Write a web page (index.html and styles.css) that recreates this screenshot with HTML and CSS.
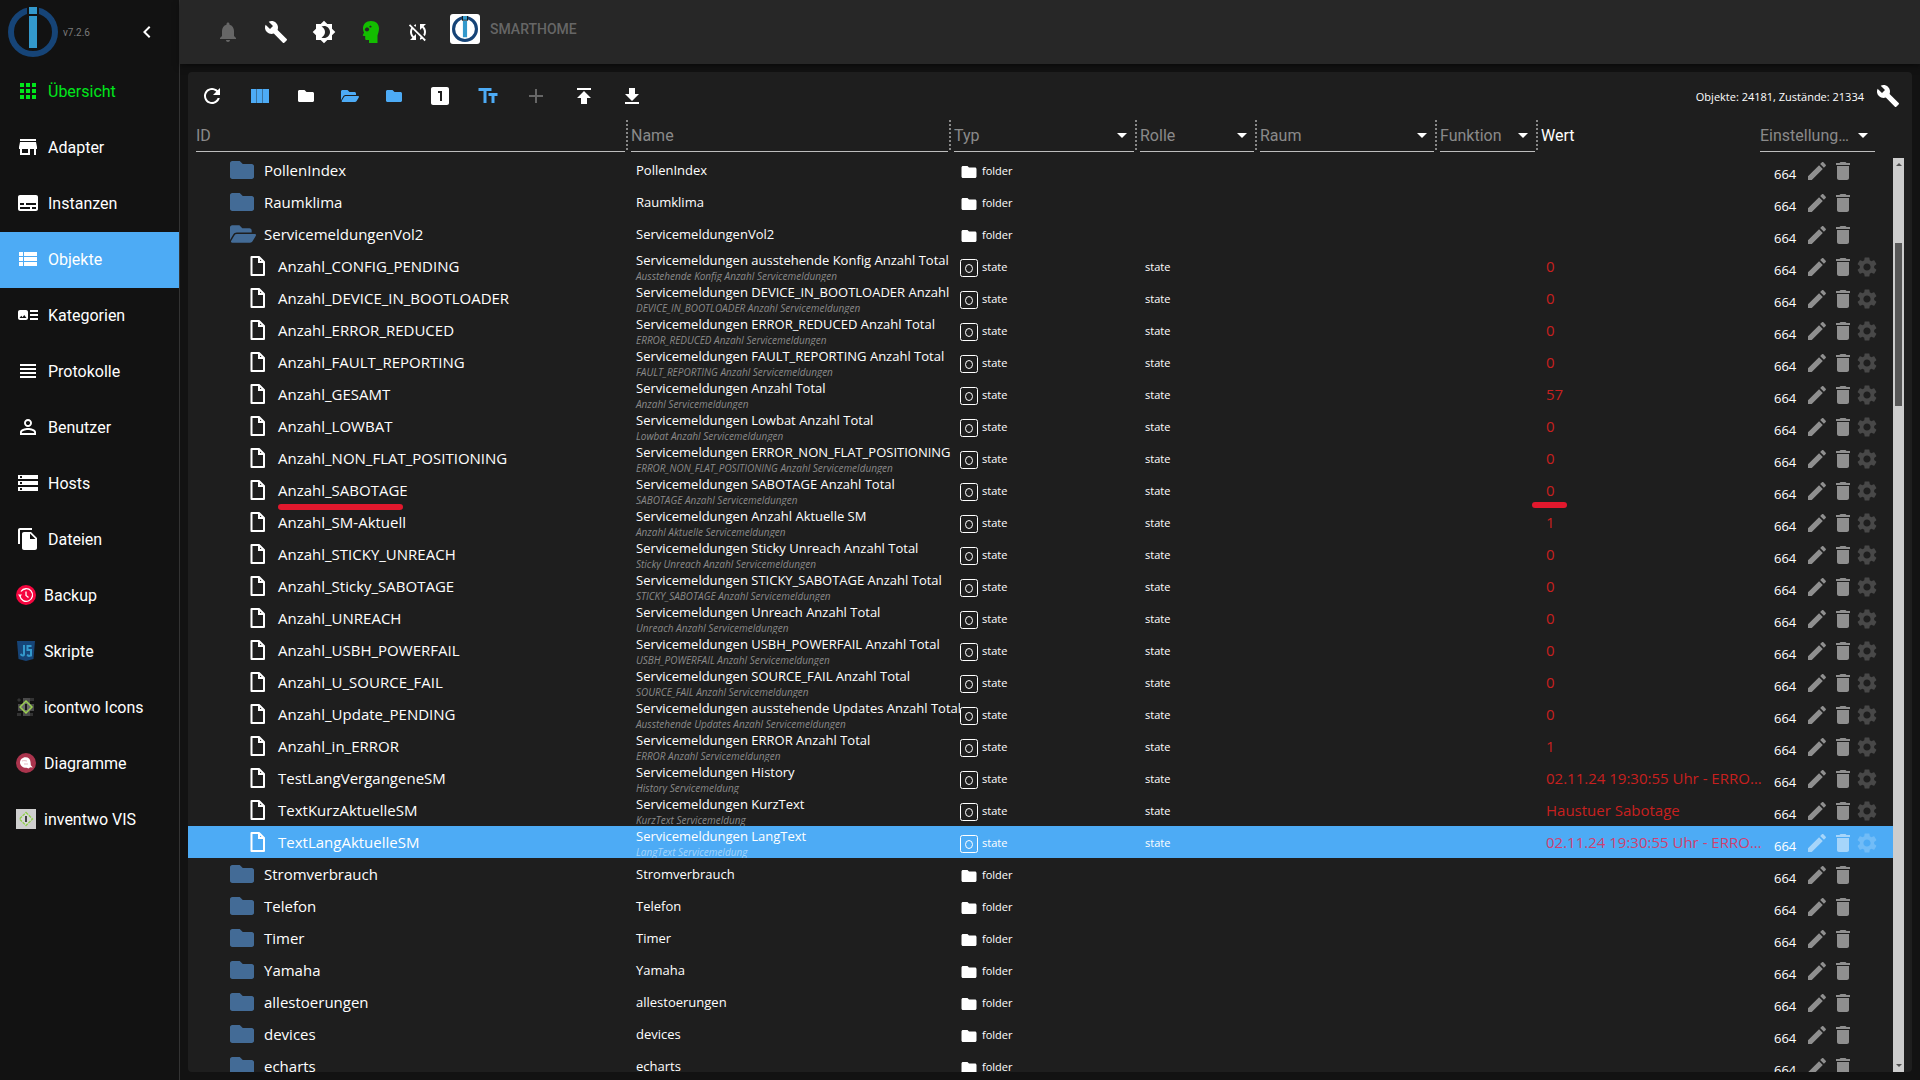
FILE: index.html
```html
<!DOCTYPE html>
<html lang="de">
<head>
<meta charset="utf-8">
<title>Objekte - ioBroker</title>
<link rel="stylesheet" href="styles.css">
</head>
<body>
<svg class="sprite" aria-hidden="true">
  <symbol id="i-chevron" viewBox="0 0 24 24"><path d="M15.41 7.41L14 6l-6 6 6 6 1.41-1.41L10.83 12z"/></symbol>
  <symbol id="i-apps" viewBox="0 0 24 24"><path d="M4 8h4V4H4v4zm6 12h4v-4h-4v4zm-6 0h4v-4H4v4zm0-6h4v-4H4v4zm6 0h4v-4h-4v4zm6-10v4h4V4h-4zm-6 4h4V4h-4v4zm6 6h4v-4h-4v4zm0 6h4v-4h-4v4z"/></symbol>
  <symbol id="i-store" viewBox="0 0 24 24"><path d="M20 4H4v2h16V4zm1 10v-2l-1-5H4l-1 5v2h1v6h10v-6h4v6h2v-6h1zm-9 4H6v-4h6v4z"/></symbol>
  <symbol id="i-subtitles" viewBox="0 0 24 24"><path d="M20 4H4c-1.1 0-2 .9-2 2v12c0 1.1.9 2 2 2h16c1.1 0 2-.9 2-2V6c0-1.1-.9-2-2-2zM4 12h4v2H4v-2zm10 6H4v-2h10v2zm6 0h-4v-2h4v2zm0-4H10v-2h10v2z"/></symbol>
  <symbol id="i-list" viewBox="0 0 24 24"><path d="M3 14h4v-4H3v4zm0 5h4v-4H3v4zM3 9h4V5H3v4zm5 5h13v-4H8v4zm0 5h13v-4H8v4zM8 5v4h13V5H8z"/></symbol>
  <symbol id="i-art" viewBox="0 0 24 24"><path d="M22 13h-8v-2h8v2zm0-6h-8v2h8V7zm-8 10h8v-2h-8v2zm-2-8v6c0 1.1-.9 2-2 2H4c-1.1 0-2-.9-2-2V9c0-1.1.9-2 2-2h6c1.1 0 2 .9 2 2zm-1.5 6l-2.25-3-1.75 2.26-1.25-1.51L3.500 15h7z"/></symbol>
  <symbol id="i-headline" viewBox="0 0 24 24"><path d="M4 15h16v-2H4v2zm0 4h16v-2H4v2zm0-8h16V9H4v2zm0-6v2h16V5H4z"/></symbol>
  <symbol id="i-person" viewBox="0 0 24 24"><path d="M12 5.900c1.160 0 2.100.940 2.100 2.100s-.940 2.100-2.100 2.100S9.900 9.160 9.900 8s.940-2.100 2.100-2.100m0 9c2.970 0 6.100 1.460 6.100 2.100v1.100H5.900V17c0-.640 3.130-2.100 6.100-2.100M12 4C9.790 4 8 5.790 8 8s1.790 4 4 4 4-1.790 4-4-1.790-4-4-4zm0 9c-2.670 0-8 1.340-8 4v3h16v-3c0-2.660-5.330-4-8-4z"/></symbol>
  <symbol id="i-storage" viewBox="0 0 24 24"><path d="M2 20h20v-4H2v4zm2-3h2v2H4v-2zM2 4v4h20V4H2zm4 3H4V5h2v2zm-4 7h20v-4H2v4zm2-3h2v2H4v-2z"/></symbol>
  <symbol id="i-copy" viewBox="0 0 24 24"><path d="M16 1H4c-1.100 0-2 .900-2 2v14h2V3h12V1zm-1 4l6 6v10c0 1.100-.900 2-2 2H7.990C6.890 23 6 22.100 6 21l.010-14c0-1.100.890-2 1.990-2h7zm-1 7h5.500L14 6.500V12z"/></symbol>
  <symbol id="i-bell" viewBox="0 0 24 24"><path d="M12 22c1.100 0 2-.900 2-2h-4c0 1.100.890 2 2 2zm6-6v-5c0-3.070-1.640-5.640-4.500-6.320V4c0-.830-.670-1.500-1.500-1.500s-1.500.670-1.500 1.500v.680C7.630 5.360 6 7.920 6 11v5l-2 2v1h16v-1l-2-2z"/></symbol>
  <symbol id="i-wrench" viewBox="0 0 24 24"><path d="M22.700 19l-9.100-9.100c.900-2.300.400-5-1.500-6.900-2-2-5-2.400-7.400-1.300L9 6 6 9 1.600 4.700C.400 7.100.900 10.100 2.900 12.100c1.900 1.900 4.600 2.400 6.900 1.500l9.100 9.100c.400.400 1 .400 1.400 0l2.300-2.300c.500-.400.500-1.100.100-1.400z"/></symbol>
  <symbol id="i-brightness" viewBox="0 0 24 24"><path d="M20 8.690V4h-4.690L12 .690 8.690 4H4v4.690L.690 12 4 15.310V20h4.690L12 23.310 15.310 20H20v-4.690L23.310 12 20 8.690zM12 18c-.890 0-1.740-.200-2.500-.550C11.560 16.500 13 14.420 13 12s-1.440-4.500-3.500-5.450C10.260 6.200 11.110 6 12 6c3.310 0 6 2.690 6 6s-2.690 6-6 6z"/></symbol>
  <symbol id="i-head" viewBox="0 0 24 24"><path fill-rule="evenodd" d="M12 1c5 0 8 3 8 7.500 0 3-1 5-1.500 7V23H10v-3H7.500c-.8 0-1.300-.5-1.300-1.300V16H4.500c-.6 0-.8-.4-.6-.9L5 12.500C4.300 11 4 10 4 8.500 4 4 7 1 12 1zM8 7.200l-1.300.8-1 1.200.6 1.600 1.500.7 1.600-.5.8-1.500-.6-1.600zM11.500 5.500l-1.200.7.4 1.300 1.400.1.600-1.200z"/></symbol>
  <symbol id="i-nosync" viewBox="0 0 24 24"><path d="M10 6.350V4.260c-.800.210-1.550.540-2.230.960l1.460 1.460c.250-.120.500-.240.770-.330zm-7.140-.940l2.360 2.360C4.450 8.990 4 10.440 4 12c0 2.210.910 4.200 2.360 5.640L4 20h6v-6l-2.240 2.240C6.680 15.150 6 13.660 6 12c0-1 .250-1.940.680-2.770l8.080 8.080c-.250.130-.500.250-.770.340v2.090c.800-.210 1.550-.540 2.230-.960l2.360 2.360 1.270-1.270L4.140 4.140 2.860 5.410zM20 4h-6v6l2.240-2.240C17.320 8.850 18 10.340 18 12c0 1-.250 1.940-.680 2.770l1.460 1.460C19.550 15.010 20 13.560 20 12c0-2.210-.910-4.200-2.360-5.640L20 4z"/></symbol>
  <symbol id="i-refresh" viewBox="0 0 24 24"><path d="M17.650 6.350C16.200 4.900 14.210 4 12 4c-4.420 0-7.990 3.580-7.990 8s3.570 8 7.990 8c3.730 0 6.840-2.550 7.730-6h-2.080c-.820 2.330-3.040 4-5.650 4-3.310 0-6-2.690-6-6s2.690-6 6-6c1.660 0 3.140.690 4.220 1.780L13 11h7V4l-2.350 2.350z"/></symbol>
  <symbol id="i-columns" viewBox="0 0 24 24"><path opacity=".6" d="M3 5h18v14H3z"/><path d="M3 5h5v14H3zM9 5h5v14H9zM15 5h6v14h-6z"/></symbol>
  <symbol id="i-folder" viewBox="0 0 512 512"><path d="M464 128H272l-64-64H48C21.490 64 0 85.490 0 112v288c0 26.510 21.490 48 48 48h416c26.510 0 48-21.490 48-48V176c0-26.510-21.490-48-48-48z"/></symbol>
  <symbol id="i-folder-open" viewBox="0 0 576 512"><path d="M572.694 292.093L500.270 416.248A63.997 63.997 0 0 1 444.989 448H45.025c-18.523 0-30.064-20.093-20.731-36.093l72.424-124.155A64 64 0 0 1 152 256h399.964c18.523 0 30.064 20.093 20.730 36.093zM152 224h328v-48c0-26.510-21.490-48-48-48H272l-64-64H48C21.490 64 0 85.490 0 112v278.046l69.077-118.418C86.214 242.250 117.989 224 152 224z"/></symbol>
  <symbol id="i-one" viewBox="0 0 24 24"><path d="M19 3H5c-1.100 0-2 .900-2 2v14c0 1.100.900 2 2 2h14c1.100 0 2-.900 2-2V5c0-1.100-.900-2-2-2zm-5 14h-2V9h-2V7h4v10z"/></symbol>
  <symbol id="i-text" viewBox="0 0 24 24"><path d="M2.500 4v3h5v12h3V7h5V4h-13zm19 5h-9v3h3v7h3v-7h3V9z"/></symbol>
  <symbol id="i-add" viewBox="0 0 24 24"><path d="M19 13h-6v6h-2v-6H5v-2h6V5h2v6h6v2z"/></symbol>
  <symbol id="i-upload" viewBox="0 0 24 24"><path d="M5 4v2h14V4H5zm0 10h4v6h6v-6h4l-7-7-7 7z"/></symbol>
  <symbol id="i-download" viewBox="0 0 24 24"><path d="M19 10h-4V4H9v6H5l7 7 7-7zM5 18v2h14v-2H5z"/></symbol>
  <symbol id="i-doc" viewBox="0 0 15 20"><path fill="none" stroke="currentColor" stroke-width="2" stroke-linejoin="round" d="M1.500 1h7.500L14 6v13H1.500z"/><path d="M8 1h2v4h4v2H8z"/></symbol>
  <symbol id="i-state" viewBox="0 0 18 18"><rect x=".5" y=".5" width="17" height="17" rx="2" fill="none" stroke="currentColor"/><ellipse cx="9" cy="9.500" rx="3.500" ry="4" fill="none" stroke="currentColor"/></symbol>
  <symbol id="i-typefolder" viewBox="0 0 24 24"><path d="M10 4H4c-1.100 0-1.990.900-1.990 2L2 18c0 1.100.900 2 2 2h16c1.100 0 2-.900 2-2V8c0-1.100-.900-2-2-2h-8l-2-2z"/></symbol>
  <symbol id="i-edit" viewBox="0 0 24 24"><path d="M3 17.250V21h3.750L17.810 9.940l-3.750-3.750L3 17.250zM20.710 7.040c.390-.390.390-1.020 0-1.410l-2.340-2.340c-.390-.390-1.020-.390-1.410 0l-1.830 1.830 3.750 3.750 1.830-1.830z"/></symbol>
  <symbol id="i-delete" viewBox="0 0 24 24"><path d="M6 19c0 1.100.900 2 2 2h8c1.100 0 2-.900 2-2V7H6v12zM19 4h-3.500l-1-1h-5l-1 1H5v2h14V4z"/></symbol>
  <symbol id="i-gear" viewBox="0 0 24 24"><path d="M19.140 12.940c.040-.300.060-.610.060-.940 0-.320-.020-.640-.070-.940l2.030-1.580c.180-.140.230-.410.120-.610l-1.920-3.320c-.120-.220-.370-.290-.590-.220l-2.390.960c-.500-.380-1.030-.700-1.620-.940l-.360-2.540c-.040-.240-.240-.410-.480-.410h-3.840c-.240 0-.430.170-.470.410l-.360 2.540c-.590.240-1.130.570-1.620.940l-2.390-.960c-.220-.080-.470 0-.590.220L2.740 8.870c-.120.210-.080.470.120.610l2.030 1.580c-.050.300-.090.630-.090.940s.020.640.070.940l-2.030 1.580c-.180.140-.230.410-.120.610l1.920 3.320c.120.220.370.290.590.220l2.390-.960c.500.380 1.030.700 1.620.940l.360 2.540c.050.240.240.410.480.410h3.840c.240 0 .440-.170.470-.410l.360-2.540c.590-.240 1.130-.560 1.620-.940l2.390.960c.220.080.470 0 .590-.220l1.920-3.320c.120-.220.070-.470-.120-.610l-2.010-1.580zM12 15.600c-1.980 0-3.600-1.620-3.600-3.600s1.620-3.600 3.600-3.600 3.600 1.620 3.600 3.600-1.620 3.600-3.600 3.600z"/></symbol>
  <symbol id="i-logo" viewBox="0 0 50 50"><circle cx="25" cy="25" r="22" fill="none" stroke="#164477" stroke-width="6"/><path class="logo-gap" d="M19 0h12v9H19z"/><path fill="#3399cc" d="M21 0h8v7h-8zM21 9h8v32h-8z"/></symbol>
</svg>

<div class="app">
  <aside class="drawer">
    <header class="drawer-head">
      <a class="brand" href="#" aria-label="ioBroker"><svg class="logo"><use href="#i-logo"/></svg></a>
      <span class="version">v7.2.6</span>
      <button class="collapse" aria-label="Menü einklappen"><svg class="icon"><use href="#i-chevron"/></svg></button>
    </header>
    <nav class="menu">
      <a class="menu-item menu-item--green" href="#"><svg class="icon"><use href="#i-apps"/></svg>Übersicht</a>
      <a class="menu-item" href="#"><svg class="icon"><use href="#i-store"/></svg>Adapter</a>
      <a class="menu-item" href="#"><svg class="icon"><use href="#i-subtitles"/></svg>Instanzen</a>
      <a class="menu-item menu-item--active" href="#" aria-current="page"><svg class="icon"><use href="#i-list"/></svg>Objekte</a>
      <a class="menu-item" href="#"><svg class="icon"><use href="#i-art"/></svg>Kategorien</a>
      <a class="menu-item" href="#"><svg class="icon"><use href="#i-headline"/></svg>Protokolle</a>
      <a class="menu-item" href="#"><svg class="icon"><use href="#i-person"/></svg>Benutzer</a>
      <a class="menu-item" href="#"><svg class="icon"><use href="#i-storage"/></svg>Hosts</a>
      <a class="menu-item" href="#"><svg class="icon"><use href="#i-copy"/></svg>Dateien</a>
      <a class="menu-item" href="#"><svg class="icon icon--tab" viewBox="0 0 20 20"><circle cx="10" cy="10" r="10" fill="#f5063f"/><path d="M4 11a6.300 6.300 0 1 0 1-4.500M10 6.500V10.500l2.500 2" fill="none" stroke="#fff" stroke-width="1.300"/><path d="M2 9.500h4L4 12z" fill="#fff"/></svg>Backup</a>
      <a class="menu-item" href="#"><svg class="icon icon--tab" viewBox="0 0 20 20"><path d="M1 0h18l-1.500 18L10 20l-7.500-2z" fill="#164477"/><path d="M8 4v9.500c0 1-1.500 1.500-2.200.7L4.500 13M15.500 5H11.500v4h3.500v5.500l-2 .5-2-1" fill="none" stroke="#3399cc" stroke-width="2"/></svg>Skripte</a>
      <a class="menu-item" href="#"><svg class="icon icon--tab" viewBox="0 0 20 20"><path d="M2 7h16v7H2zM7 1h7v18H7z" fill="#4a4a4a"/><path d="M1 3l2-2 2 2-2 2zM14 1h4v3h-4zM1 16h4v3H1zM14 16h3v3h-3z" fill="#333"/><path d="M10 4l6 6-6 6-6-6z" fill="#6a6a6a" stroke="#9bd050" stroke-width="1.500"/><path d="M9 7h2v6H9z" fill="#191919"/></svg>icontwo Icons</a>
      <a class="menu-item" href="#"><svg class="icon icon--tab" viewBox="0 0 20 20"><circle cx="10" cy="10" r="10" fill="#aa344d"/><path d="M9.500 4.200c3 0 4.800 2 5 4.800l.3 3.200 2 2.300-2.500-.3-1.800 1.300-2-.7C7 15 4 12.500 4 9.500c0-3 2.500-5.300 5.500-5.300z" fill="#fff"/><path d="M6 8c2-1 4 0 5 0M8 11h4" fill="none" stroke="#e3b9c2"/></svg>Diagramme</a>
      <a class="menu-item" href="#"><svg class="icon icon--tab" viewBox="0 0 20 20"><path d="M0 0h20v20H0z" fill="#cfcfcf"/><path d="M10 3.500l6.500 6.500-6.500 6.500L3.500 10z" fill="#d8d8d8" stroke="#8fd048" stroke-width="1.300" stroke-dasharray="3 1"/><path d="M9 7h2v6H9z" fill="#444"/></svg>inventwo VIS</a>
    </nav>
  </aside>

  <div class="main">
    <header class="appbar">
      <button class="tool tool--dim" aria-label="Benachrichtigungen"><svg class="icon"><use href="#i-bell"/></svg></button>
      <button class="tool" aria-label="Systemeinstellungen"><svg class="icon"><use href="#i-wrench"/></svg></button>
      <button class="tool" aria-label="Farbschema"><svg class="icon"><use href="#i-brightness"/></svg></button>
      <button class="tool tool--mid tool--green" aria-label="Expertenmodus"><svg class="icon"><use href="#i-head"/></svg></button>
      <button class="tool" aria-label="Synchronisieren"><svg class="icon"><use href="#i-nosync"/></svg></button>
      <a class="host" href="#"><span class="host-tile"><svg class="host-logo"><use href="#i-logo"/></svg></span>SMARTHOME</a>
    </header>

    <main class="panel">
      <div class="toolbar">
        <button class="tool" aria-label="Aktualisieren"><svg class="icon"><use href="#i-refresh"/></svg></button>
        <button class="tool tool--blue" aria-label="Spalten"><svg class="icon"><use href="#i-columns"/></svg></button>
        <button class="tool tool--narrow" aria-label="Alle zuklappen"><svg class="icon icon--16"><use href="#i-folder"/></svg></button>
        <button class="tool tool--narrow tool--blue" aria-label="Alle aufklappen"><svg class="icon icon--18"><use href="#i-folder-open"/></svg></button>
        <button class="tool tool--narrow tool--blue" aria-label="Eine Ebene zuklappen"><svg class="icon icon--16"><use href="#i-folder"/></svg></button>
        <button class="tool" aria-label="Ebene"><svg class="icon"><use href="#i-one"/></svg></button>
        <button class="tool tool--blue" aria-label="Namen anzeigen"><svg class="icon"><use href="#i-text"/></svg></button>
        <button class="tool tool--dim" aria-label="Hinzufügen"><svg class="icon"><use href="#i-add"/></svg></button>
        <button class="tool" aria-label="Importieren"><svg class="icon"><use href="#i-upload"/></svg></button>
        <button class="tool" aria-label="Exportieren"><svg class="icon"><use href="#i-download"/></svg></button>
        <span class="counts">Objekte: 24181, Zustände: 21334</span>
        <button class="tool" aria-label="Spalteneinstellungen"><svg class="icon"><use href="#i-wrench"/></svg></button>
      </div>

      <div class="browser">
        <div class="objects-wrap">
          <table class="objects">
            <colgroup>
              <col><col class="c-name"><col class="c-type"><col class="c-role"><col class="c-room"><col class="c-func"><col class="c-value"><col class="c-buttons">
            </colgroup>
            <thead>
              <tr>
                <th><div class="filter"><input class="field" type="text" placeholder="ID" aria-label="ID"></div></th>
                <th><div class="filter"><input class="field" type="text" placeholder="Name" aria-label="Name"></div></th>
                <th><div class="filter"><select class="field field--select" aria-label="Typ"><option>Typ</option></select></div></th>
                <th><div class="filter"><select class="field field--select" aria-label="Rolle"><option>Rolle</option></select></div></th>
                <th><div class="filter"><select class="field field--select" aria-label="Raum"><option>Raum</option></select></div></th>
                <th><div class="filter"><select class="field field--select" aria-label="Funktion"><option>Funktion</option></select></div></th>
                <th class="plain">Wert</th>
                <th><select class="field field--select" aria-label="Einstellungen"><option>Einstellung…</option></select></th>
              </tr>
            </thead>
            <tbody id="rows"></tbody>
          </table>
        </div>
        <div class="scrollbar" aria-hidden="true"><span class="arrow arrow--up"></span><span class="thumb"></span><span class="arrow arrow--down"></span></div>
      </div>
    </main>
  </div>
</div>
<script src="script.js"></script>
</body>
</html>
```
FILE: styles.css
```css
* { box-sizing: border-box; }

body {
  margin: 0;
  background: #121212;
  color: #fff;
  font-family: Roboto, "Liberation Sans", sans-serif;
  font-size: 16px;
}

button {
  display: flex;
  align-items: center;
  justify-content: center;
  padding: 0;
  border: 0;
  background: none;
  color: inherit;
  font: inherit;
}

a { color: inherit; text-decoration: none; }

.sprite { display: none; }

.icon {
  display: block;
  flex: none;
  width: 24px;
  height: 24px;
  fill: currentColor;
}
.icon--16 { width: 16px; height: 16px; }
.icon--18 { width: 18px; height: 16px; }
.icon--tab { width: 20px; height: 20px; }

.app { display: flex; height: 100vh; overflow: hidden; }

/* Drawer */
.drawer {
  flex: none;
  width: 180px;
  border-right: 1px solid #333;
}
.drawer-head {
  display: flex;
  align-items: center;
  height: 64px;
  padding: 0 20px 0 8px;
}
.logo { display: block; width: 50px; height: 50px; }
.logo-gap { fill: #121212; }
.version { flex: 1; padding-left: 5px; color: #7a7a7a; font-size: 10px; }
.menu-item {
  display: flex;
  align-items: center;
  gap: 8px;
  height: 56px;
  padding: 0 0 2px 16px;
}
.menu-item--green { color: #00e61b; }
.menu-item--active { background: #4dabf5; }

/* App bar */
.main { flex: 1; min-width: 0; display: flex; flex-direction: column; }
.appbar {
  display: flex;
  flex: none;
  align-items: center;
  height: 64px;
  padding-left: 24px;
  background: #272727;
  box-shadow: 0 2px 6px rgba(0, 0, 0, .5);
}
.tool { flex: none; width: 48px; height: 48px; }
.tool--mid { width: 46px; }
.tool--narrow { width: 44px; }
.tool--dim { color: #666; }
.tool--green { color: #13bd00; }
.tool--blue { color: #4dabf5; }
.host {
  display: flex;
  gap: 10px;
  height: 30px;
  margin: 0 0 6px 8px;
  align-items: center;
  color: #666;
  font-size: 14px;
  font-weight: 500;
}
.host-tile { padding: 2px; border-radius: 3px; background: #fff; }
.host-tile .logo-gap { fill: #fff; }
.host-logo { display: block; width: 26px; height: 26px; }

/* Panel */
.panel {
  display: flex;
  flex: 1;
  flex-direction: column;
  min-height: 0;
  margin: 8px;
  border-radius: 4px;
  background: #1e1e1e;
  overflow: hidden;
}
.toolbar { display: flex; flex: none; align-items: center; height: 48px; }
.counts {
  flex: 1;
  text-align: right;
  font-family: "Open Sans", "Noto Sans", sans-serif;
  font-size: 11px;
}

.browser { display: flex; flex: 1; min-height: 0; padding-right: 8px; }
.objects-wrap { flex: 1; min-width: 0; overflow: hidden; }
.objects {
  width: 100%;
  border-collapse: collapse;
  table-layout: fixed;
  font-family: "Open Sans", "Noto Sans", sans-serif;
}
.c-name { width: 323px; }
.c-type { width: 186px; }
.c-role { width: 120px; }
.c-room { width: 180px; }
.c-func { width: 101px; }
.c-value { width: 219px; }
.c-buttons { width: 133px; }

th {
  height: 34px;
  padding: 0;
  text-align: left;
  vertical-align: top;
  font-family: Roboto, "Liberation Sans", sans-serif;
  font-weight: 400;
}
th:first-child { padding-left: 8px; }
th:last-child { padding-right: 18px; }
.plain { line-height: 32px; }
.filter {
  height: 30px;
  margin-right: 3px;
  padding-right: 1px;
  border-right: 2px dotted #888;
}
.field {
  display: block;
  width: 100%;
  height: 32px;
  padding: 0;
  border: 0;
  border-bottom: 1px solid #bdbdbd;
  border-radius: 0;
  outline: 0;
  background: none;
  color: #8a8a8a;
  font: inherit;
  appearance: none;
}
.field::placeholder { color: #8a8a8a; opacity: 1; }
.field--select {
  background: url("data:image/svg+xml,%3Csvg xmlns='http://www.w3.org/2000/svg' width='10' height='5'%3E%3Cpath fill='%23fff' d='M0 0h10L5 5z'/%3E%3C/svg%3E") no-repeat right 7px center;
}

td { height: 32px; padding: 0; white-space: nowrap; }
.selected { background: #4dabf5; }

.cell { display: flex; align-items: center; height: 32px; }
.cell--id { position: relative; padding-left: 42px; gap: 10px; font-size: 15px; }
.cell--open { gap: 8px; }
.cell--child { padding-left: 62px; gap: 13px; }
.cell--id .icon { width: 24px; height: 24px; color: #436b96; }
.cell--id .icon--open { width: 26px; }
.cell--id .icon--doc { width: 15px; height: 20px; color: #fff; }
.cell--name {
  flex-direction: column;
  align-items: flex-start;
  justify-content: center;
  margin-right: -6px;
  padding-left: 5px;
  overflow: hidden;
  font-size: 13px;
  line-height: 20px;
}
.sub { color: #8a8a8a; font-size: 10px; font-style: italic; line-height: 12px; }
.selected .sub { color: #a6d5fa; }
.cell--type { gap: 4px; padding-left: 6px; font-size: 11px; }
.cell--type .icon { width: 18px; height: 18px; margin-top: 3px; }
.cell--role { padding-left: 5px; font-size: 11px; }
.cell--value {
  position: relative;
  margin-right: -5px;
  padding-left: 5px;
  color: #c8201f;
  font-size: 15px;
}
.selected .cell--value { color: #d04070; }
.cell--buttons { padding: 2px 0 0 14px; font-size: 13px; }
.rights { width: 31px; padding-top: 5px; }
.action { width: 24px; height: 24px; color: #8f8f8f; }
.action--gear { color: #484848; }
.action + .action { margin-left: 2px; }
.action + .action--gear { margin-left: 0; }
.selected .action { color: #a6d5fa; }
.selected .action--gear { color: #71bcf7; }

.mark {
  position: absolute;
  height: 6px;
  border-radius: 3px;
  background: #e2182d;
}
.mark--id { top: 30px; left: 90px; width: 125px; }
.mark--value { top: 28px; left: -9px; width: 35px; }

/* Scrollbar */
.scrollbar {
  display: flex;
  flex-direction: column;
  align-items: center;
  width: 11px;
  margin-top: 38px;
  background: #cdcdcd;
}
.arrow { border: 3px solid transparent; }
.arrow--up { margin-top: 2px; border-bottom-color: #505050; }
.thumb { width: 7px; height: 163px; margin-top: 77px; background: #575757; }
.arrow--down { margin: auto 0 2px; border-top-color: #505050; }
```
FILE: script.js
```js
const S = "Servicemeldungen ";
const rows = [
  ["PollenIndex"],
  ["Raumklima"],
  ["ServicemeldungenVol2"],
  ["Anzahl_CONFIG_PENDING", S + "ausstehende Konfig Anzahl Total", "Ausstehende Konfig Anzahl Servicemeldungen", "0"],
  ["Anzahl_DEVICE_IN_BOOTLOADER", S + "DEVICE_IN_BOOTLOADER Anzahl", "DEVICE_IN_BOOTLOADER Anzahl Servicemeldungen", "0"],
  ["Anzahl_ERROR_REDUCED", S + "ERROR_REDUCED Anzahl Total", "ERROR_REDUCED Anzahl Servicemeldungen", "0"],
  ["Anzahl_FAULT_REPORTING", S + "FAULT_REPORTING Anzahl Total", "FAULT_REPORTING Anzahl Servicemeldungen", "0"],
  ["Anzahl_GESAMT", S + "Anzahl Total", "Anzahl Servicemeldungen", "57"],
  ["Anzahl_LOWBAT", S + "Lowbat Anzahl Total", "Lowbat Anzahl Servicemeldungen", "0"],
  ["Anzahl_NON_FLAT_POSITIONING", S + "ERROR_NON_FLAT_POSITIONING", "ERROR_NON_FLAT_POSITIONING Anzahl Servicemeldungen", "0"],
  ["Anzahl_SABOTAGE", S + "SABOTAGE Anzahl Total", "SABOTAGE Anzahl Servicemeldungen", "0"],
  ["Anzahl_SM-Aktuell", S + "Anzahl Aktuelle SM", "Anzahl Aktuelle Servicemeldungen", "1"],
  ["Anzahl_STICKY_UNREACH", S + "Sticky Unreach Anzahl Total", "Sticky Unreach Anzahl Servicemeldungen", "0"],
  ["Anzahl_Sticky_SABOTAGE", S + "STICKY_SABOTAGE Anzahl Total", "STICKY_SABOTAGE Anzahl Servicemeldungen", "0"],
  ["Anzahl_UNREACH", S + "Unreach Anzahl Total", "Unreach Anzahl Servicemeldungen", "0"],
  ["Anzahl_USBH_POWERFAIL", S + "USBH_POWERFAIL Anzahl Total", "USBH_POWERFAIL Anzahl Servicemeldungen", "0"],
  ["Anzahl_U_SOURCE_FAIL", S + "SOURCE_FAIL Anzahl Total", "SOURCE_FAIL Anzahl Servicemeldungen", "0"],
  ["Anzahl_Update_PENDING", S + "ausstehende Updates Anzahl Total", "Ausstehende Updates Anzahl Servicemeldungen", "0"],
  ["Anzahl_in_ERROR", S + "ERROR Anzahl Total", "ERROR Anzahl Servicemeldungen", "1"],
  ["TestLangVergangeneSM", S + "History", "History Servicemeldung", "02.11.24 19:30:55 Uhr - ERRO…"],
  ["TextKurzAktuelleSM", S + "KurzText", "KurzText Servicemeldung", "Haustuer Sabotage"],
  ["TextLangAktuelleSM", S + "LangText", "LangText Servicemeldung", "02.11.24 19:30:55 Uhr - ERRO…"],
  ["Stromverbrauch"],
  ["Telefon"],
  ["Timer"],
  ["Yamaha"],
  ["allestoerungen"],
  ["devices"],
  ["echarts"]
];
const OPEN = "ServicemeldungenVol2";
const SELECTED = "TextLangAktuelleSM";
const MARKED = "Anzahl_SABOTAGE";

const icon = (name, cls = "") => `<svg class="icon ${cls}"><use href="#i-${name}"/></svg>`;
const action = (name, label) =>
  `<button class="action action--${name}" aria-label="${label}">${icon(name)}</button>`;

function renderRow([id, name, sub, value]) {
  const state = name !== undefined;
  const idIcon = state ? icon("doc", "icon--doc")
    : id === OPEN ? icon("folder-open", "icon--open") : icon("folder");
  const level = state ? "cell--child" : id === OPEN ? "cell--open" : "";
  const marked = id === MARKED;
  return `<tr class="${id === SELECTED ? "selected" : ""}">
    <td><div class="cell cell--id ${level}">${idIcon}<span>${id}</span>${marked ? '<i class="mark mark--id"></i>' : ""}</div></td>
    <td><div class="cell cell--name"><span>${name || id}</span>${state ? `<span class="sub">${sub}</span>` : ""}</div></td>
    <td><div class="cell cell--type">${icon(state ? "state" : "typefolder")}<span>${state ? "state" : "folder"}</span></div></td>
    <td><div class="cell cell--role">${state ? "state" : ""}</div></td>
    <td></td>
    <td></td>
    <td><div class="cell cell--value">${state ? value : ""}${marked ? '<i class="mark mark--value"></i>' : ""}</div></td>
    <td><div class="cell cell--buttons"><span class="rights">664</span>${action("edit", "Bearbeiten")}${action("delete", "Löschen")}${state ? action("gear", "Einstellungen") : ""}</div></td>
  </tr>`;
}

document.getElementById("rows").innerHTML = rows.map(renderRow).join("");
```
